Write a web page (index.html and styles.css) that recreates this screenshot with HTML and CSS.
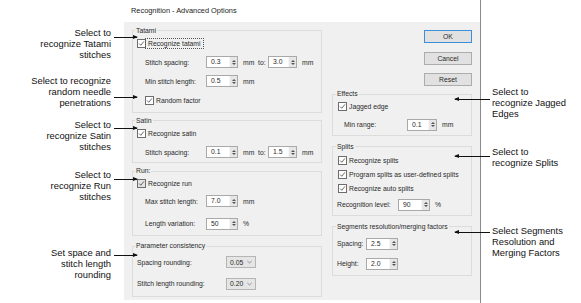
FILE: index.html
```html
<!DOCTYPE html>
<html lang="en">
<head>
  <meta charset="UTF-8">
  <meta name="viewport" content="width=device-width, initial-scale=1.0">
  <title>Recognition - Advanced Options</title>
  <link rel="stylesheet" href="styles.css">
</head>
<body>
  <div class="notes notes-left">
    <div class="note n-tatami">Select to<br>recognize Tatami<br>stitches<span class="arrow"></span></div>
    <div class="note n-random">Select to recognize<br>random needle<br>penetrations<span class="arrow"></span></div>
    <div class="note n-satin">Select to<br>recognize Satin<br>stitches<span class="arrow"></span></div>
    <div class="note n-run">Select to<br>recognize Run<br>stitches<span class="arrow"></span></div>
    <div class="note n-param">Set space and<br>stitch length<br>rounding<span class="arrow"></span></div>
  </div>

  <div class="dialog">
    <div class="title">Recognition - Advanced Options</div>
    <div class="dialog-body">
      <div class="col col-left">
        <fieldset class="group g-tatami">
          <legend>Tatami</legend>
          <div class="row pad-s">
            <span class="box"><svg viewBox="0 0 9 9"><polyline points="1.5,4.6 3.6,6.8 7.6,1.8"/></svg></span>
            <span class="txt focus">Recognize tatami</span>
          </div>
          <div class="row pad-l">
            <span class="lbl w61">Stitch spacing:</span>
            <span class="spin w32"><span class="val">0.3</span><span class="arrows"></span></span>
            <span class="unit">mm</span>
            <span class="to">to:</span>
            <span class="spin w29"><span class="val">3.0</span><span class="arrows"></span></span>
            <span class="unit">mm</span>
          </div>
          <div class="row pad-l">
            <span class="lbl w61">Min stitch length:</span>
            <span class="spin w32"><span class="val">0.5</span><span class="arrows"></span></span>
            <span class="unit">mm</span>
          </div>
          <div class="row pad-l">
            <span class="box"><svg viewBox="0 0 9 9"><polyline points="1.5,4.6 3.6,6.8 7.6,1.8"/></svg></span>
            <span class="txt">Random factor</span>
          </div>
        </fieldset>

        <fieldset class="group g-satin">
          <legend>Satin</legend>
          <div class="row pad-s">
            <span class="box"><svg viewBox="0 0 9 9"><polyline points="1.5,4.6 3.6,6.8 7.6,1.8"/></svg></span>
            <span class="txt">Recognize satin</span>
          </div>
          <div class="row pad-l">
            <span class="lbl w61">Stitch spacing:</span>
            <span class="spin w32"><span class="val">0.1</span><span class="arrows"></span></span>
            <span class="unit">mm</span>
            <span class="to">to:</span>
            <span class="spin w29"><span class="val">1.5</span><span class="arrows"></span></span>
            <span class="unit">mm</span>
          </div>
        </fieldset>

        <fieldset class="group g-run">
          <legend>Run:</legend>
          <div class="row pad-s">
            <span class="box hover"><svg viewBox="0 0 9 9"><polyline points="1.5,4.6 3.6,6.8 7.6,1.8"/></svg></span>
            <span class="txt">Recognize run</span>
          </div>
          <div class="row pad-l r-max">
            <span class="lbl w61">Max stitch length:</span>
            <span class="spin w32"><span class="val">7.0</span><span class="arrows"></span></span>
            <span class="unit">mm</span>
          </div>
          <div class="row pad-l r-var">
            <span class="lbl w61">Length variation:</span>
            <span class="spin w32"><span class="val">50</span><span class="arrows"></span></span>
            <span class="unit">%</span>
          </div>
        </fieldset>

        <fieldset class="group g-param">
          <legend>Parameter consistency</legend>
          <div class="row pad-s">
            <span class="lbl w89">Spacing rounding:</span>
            <span class="drop">0.05<svg viewBox="0 0 6 4"><polyline points="0.5,0.8 3,3.2 5.5,0.8"/></svg></span>
          </div>
          <div class="row pad-s">
            <span class="lbl w89">Stitch length rounding:</span>
            <span class="drop">0.20<svg viewBox="0 0 6 4"><polyline points="0.5,0.8 3,3.2 5.5,0.8"/></svg></span>
          </div>
        </fieldset>
      </div>

      <div class="col col-right">
        <div class="buttons">
          <div class="btn default">OK</div>
          <div class="btn">Cancel</div>
          <div class="btn">Reset</div>
        </div>

        <fieldset class="group g-effects">
          <legend>Effects</legend>
          <div class="row pad-c">
            <span class="box"><svg viewBox="0 0 9 9"><polyline points="1.5,4.6 3.6,6.8 7.6,1.8"/></svg></span>
            <span class="txt">Jagged edge</span>
          </div>
          <div class="row pad-m r-range">
            <span class="lbl w63">Min range:</span>
            <span class="spin w30"><span class="val">0.1</span><span class="arrows"></span></span>
            <span class="unit">mm</span>
          </div>
        </fieldset>

        <fieldset class="group g-splits">
          <legend>Splits</legend>
          <div class="row pad-c r-split first">
            <span class="box"><svg viewBox="0 0 9 9"><polyline points="1.5,4.6 3.6,6.8 7.6,1.8"/></svg></span>
            <span class="txt">Recognize splits</span>
          </div>
          <div class="row pad-c r-split">
            <span class="box"><svg viewBox="0 0 9 9"><polyline points="1.5,4.6 3.6,6.8 7.6,1.8"/></svg></span>
            <span class="txt">Program splits as user-defined splits</span>
          </div>
          <div class="row pad-c r-split">
            <span class="box"><svg viewBox="0 0 9 9"><polyline points="1.5,4.6 3.6,6.8 7.6,1.8"/></svg></span>
            <span class="txt">Recognize auto splits</span>
          </div>
          <div class="row pad-s r-level">
            <span class="lbl w61">Recognition level:</span>
            <span class="spin w32"><span class="val">90</span><span class="arrows"></span></span>
            <span class="unit">%</span>
          </div>
        </fieldset>

        <fieldset class="group g-segments">
          <legend>Segments resolution/merging factors</legend>
          <div class="row pad-s r-seg first">
            <span class="lbl w29">Spacing:</span>
            <span class="spin w32"><span class="val">2.5</span><span class="arrows"></span></span>
          </div>
          <div class="row pad-s r-seg">
            <span class="lbl w29">Height:</span>
            <span class="spin w32"><span class="val">2.0</span><span class="arrows"></span></span>
          </div>
        </fieldset>
      </div>
    </div>
  </div>

  <div class="notes notes-right">
    <div class="note n-jagged">Select to<br>recognize Jagged<br>Edges<span class="arrow"></span></div>
    <div class="note n-splits">Select to<br>recognize Splits<span class="arrow"></span></div>
    <div class="note n-segments">Select Segments<br>Resolution and<br>Merging Factors<span class="arrow"></span></div>
  </div>
</body>
</html>
```

FILE: styles.css
```css
*{
  margin: 0;
  padding: 0;
  box-sizing: border-box;
}
body{
  width: 581px;
  height: 303px;
  display: flex;
  overflow: hidden;
  background: #fff;
  font-family: "Liberation Sans", Arial, sans-serif;
  color: #2a2a2a;
}

/* callouts */
.notes{
  flex: none;
  display: flex;
  flex-direction: column;
  font-size: 9.4px;
  line-height: 11px;
  color: #111;
}
.notes-left{
  width: 124px;
  padding-right: 13px;
  text-align: right;
}
.notes-right{
  flex: 1;
  padding-left: 11px;
}
.note{
  position: relative;
}
.arrow{
  position: absolute;
  height: 1px;
  background: #111;
}
.arrow::after{
  content: '';
  position: absolute;
  top: -2px;
  border-top: 2.5px solid transparent;
  border-bottom: 2.5px solid transparent;
}
.notes-left .arrow{
  left: 114px;
  width: 23px;
}
.notes-left .arrow::after{
  right: -1px;
  border-left: 5px solid #111;
}
.notes-right .arrow{
  left: -37px;
  width: 35px;
}
.notes-right .arrow::after{
  left: -1px;
  border-right: 5px solid #111;
}

.n-tatami{ margin-top: 27px; }
.n-tatami .arrow{ top: 10px; }
.n-random{ margin-top: 15px; }
.n-random .arrow{ top: 21.5px; }
.n-satin{ margin-top: 11px; }
.n-satin .arrow{ top: 9px; }
.n-run{ margin-top: 17px; }
.n-run .arrow{ top: 10px; }
.n-param{ margin-top: 45px; }
.n-param .arrow{ top: 8px; }

.n-jagged{ margin-top: 86px; }
.n-jagged .arrow{ top: 13px; }
.n-splits{ margin-top: 27px; }
.n-splits .arrow{ top: 9.5px; }
.n-segments{ margin-top: 57px; }
.n-segments .arrow{ top: 7px; }

/* dialog */
.dialog{
  flex: none;
  width: 357px;
  display: flex;
  flex-direction: column;
  border-right: 1px solid #8c8c8c;
  font-size: 6.8px;
}
.title{
  height: 22px;
  padding: 6px 0 0 7px;
  font-size: 7.4px;
  line-height: 9px;
  color: #222;
}
.dialog-body{
  height: 278px;
  display: flex;
  gap: 10px;
  padding: 0 8px;
  background: #f0f0f0;
}
.col{
  display: flex;
  flex-direction: column;
}
.col-left{
  width: 190px;
  padding-top: 5.7px;
}
.col-right{
  width: 140px;
  padding-top: 8px;
}

.group{
  border: 1px solid #dcdcdc;
  min-width: 0;
}
.group legend{
  margin-left: 2px;
  padding: 0 1px;
  line-height: 6px;
  font-size: 6.8px;
}
.col-right .group legend{
  margin-left: 3px;
}

.g-tatami{ padding-bottom: 2.3px; }
.g-satin{ margin-top: 4.7px; }
.g-run{ margin-top: 5.7px; padding-bottom: 2px; }
.g-param{ margin-top: 7px; padding-top: 2px; padding-bottom: 1.6px; }
.g-effects{ margin-top: 5px; padding-bottom: 2px; }
.g-splits{ margin-top: 7.7px; padding-bottom: 0.7px; }
.g-segments{ margin-top: 8px; padding-bottom: 1px; }

.row{
  display: flex;
  align-items: center;
  height: 19px;
  white-space: nowrap;
}
.pad-s{ padding-left: 4px; }
.pad-c{ padding-left: 5px; }
.pad-m{ padding-left: 11px; }
.pad-l{ padding-left: 12px; }

.r-max{ height: 16px; }
.r-var{ margin-top: 5px; }
.g-param .row{ height: 21.5px; }
.r-range{ height: 17px; }
.r-split{ height: 14px; }
.r-split.first{ margin-top: 4.3px; }
.r-level{ height: 18px; }
.r-seg{ height: 20px; }
.r-seg.first{ margin-top: 4.3px; }

.lbl{ flex: none; }
.w29{ width: 29px; }
.w30{ width: 30px; }
.w32{ width: 32px; }
.w61{ width: 61px; }
.w63{ width: 63px; }
.w89{ width: 89px; }

/* checkbox */
.box{
  flex: none;
  width: 9px;
  height: 9px;
  border: 1px solid #6d6d6d;
  background: #fff;
}
.box.hover{
  background: #e3e3e3;
}
.box svg{
  display: block;
  width: 7px;
  height: 7px;
  fill: none;
  stroke: #2b2b2b;
  stroke-width: 0.9;
}
.txt{
  margin-left: 1px;
  padding: 0 1px;
}
.txt.focus{
  outline: 1px dotted #555;
  outline-offset: 1px;
}

/* spin box */
.spin{
  flex: none;
  display: flex;
  height: 12px;
  border: 1px solid #a9a9a9;
  background: #fff;
}
.spin .val{
  flex: 1;
  padding-left: 4px;
  line-height: 10px;
}
.arrows{
  width: 8px;
  display: flex;
  flex-direction: column;
  align-items: center;
  justify-content: center;
  gap: 1px;
  background: #e6e6e6;
  border-left: 1px solid #f7f7f7;
}
.arrows::before,
.arrows::after{
  content: '';
  border-left: 2px solid transparent;
  border-right: 2px solid transparent;
}
.arrows::before{
  border-bottom: 2px solid #555;
}
.arrows::after{
  border-top: 2px solid #555;
}
.unit{
  margin-left: 5px;
  width: 15px;
}
.to{
  width: 10px;
}

/* dropdown */
.drop{
  flex: none;
  display: flex;
  align-items: center;
  justify-content: space-between;
  width: 30px;
  height: 12px;
  padding: 0 3px;
  border: 1px solid #b5b5b5;
  background: #e5e5e5;
}
.drop svg{
  width: 5px;
  height: 4px;
  fill: none;
  stroke: #666;
  stroke-width: 0.8;
}

/* buttons */
.buttons{
  display: flex;
  flex-direction: column;
  align-items: flex-end;
  gap: 8.5px;
}
.btn{
  width: 48px;
  height: 13px;
  line-height: 11px;
  text-align: center;
  border: 1px solid #adadad;
  background: #e1e1e1;
}
.btn.default{
  border-color: #3f8fd8;
}
```
